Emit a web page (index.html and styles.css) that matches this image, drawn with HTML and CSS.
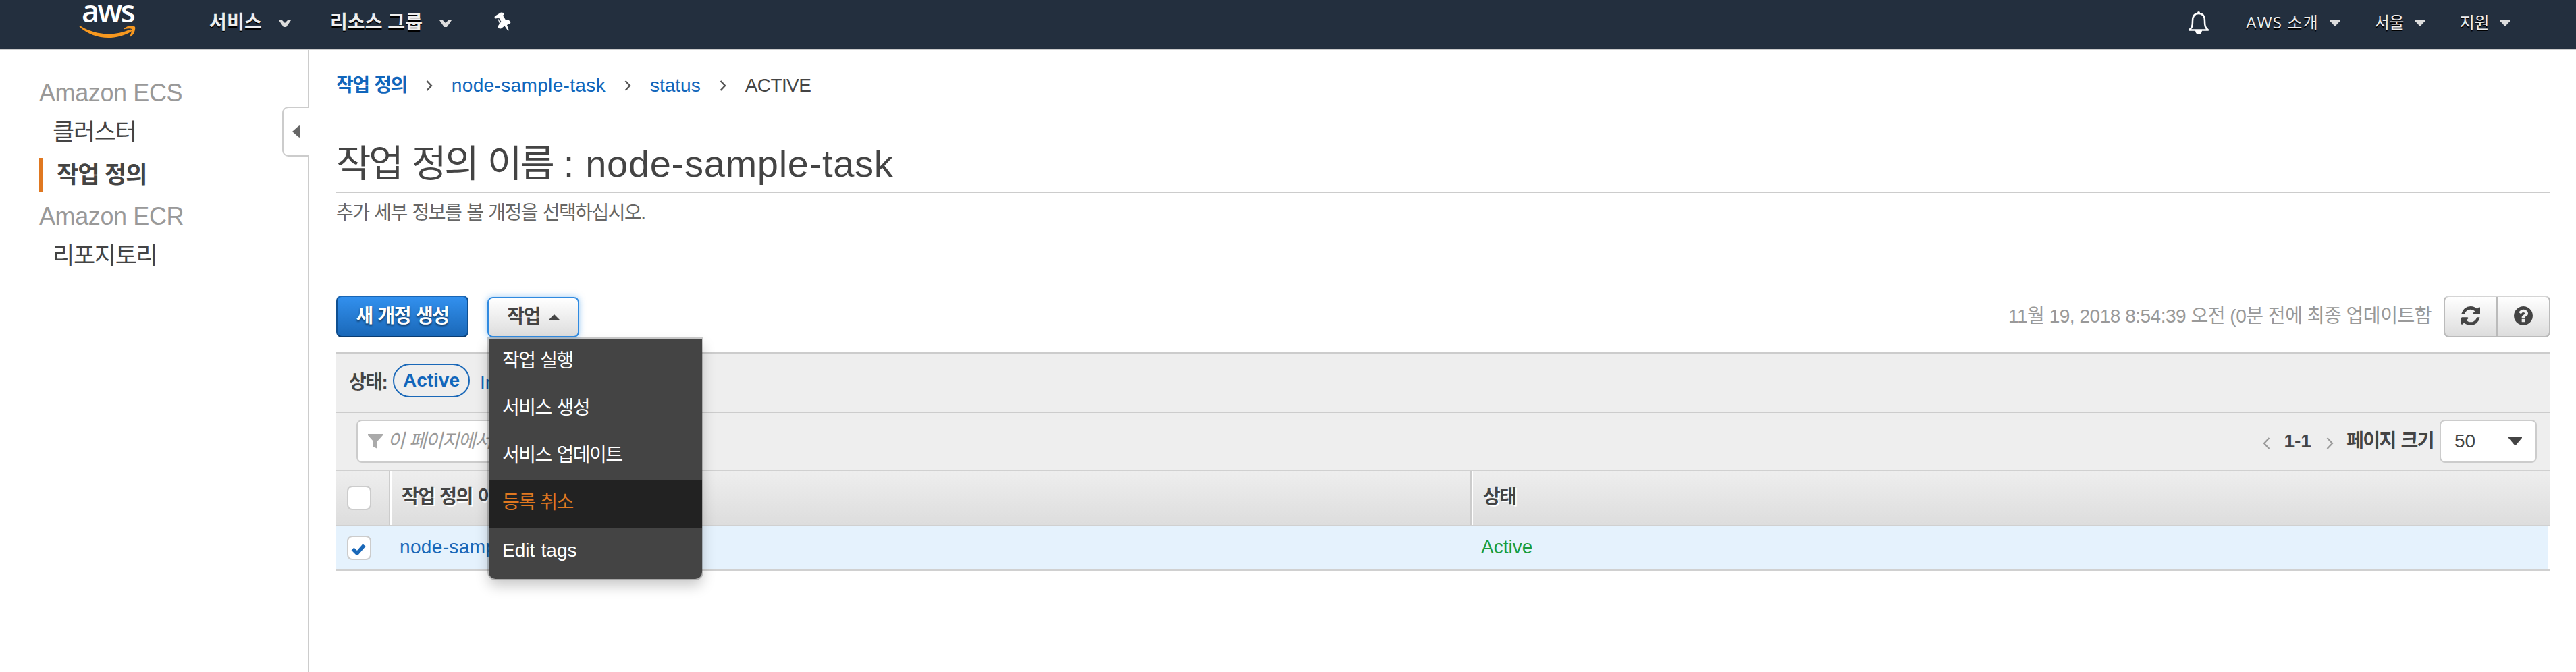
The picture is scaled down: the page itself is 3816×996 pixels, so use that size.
FILE: index.html
```html
<!DOCTYPE html>
<html lang="ko">
<head>
<meta charset="utf-8">
<title>Amazon ECS</title>
<link rel="stylesheet" href="styles.css">
</head>
<body>
<header class="nav">
  <a class="logo">
    <span class="logo-text">aws</span>
    <svg class="logo-smile" width="84" height="20" viewBox="0 0 84 20"><path d="M1 2C0 1 1 0 3 1C24 14 52 16 75 6C78 5 80 7 77 9C53 23 22 21 1 2Z"/><path d="M67 4C73-1 82 0 83 2C84 5 82 13 77 16C75 17 75 16 76 14C78 9 79 6 78 5C77 4 72 4 68 5C66 6 66 5 67 4Z"/></svg>
  </a>
  <div class="nav-main">
    <span class="nav-item services">서비스<svg class="chev" width="18" height="11" viewBox="0 0 18 11"><path d="M0 0H5L9 4L13 0H18L11 10H7Z"/></svg></span>
    <span class="nav-item groups">리소스 그룹<svg class="chev" width="18" height="11" viewBox="0 0 18 11"><path d="M0 0H5L9 4L13 0H18L11 10H7Z"/></svg></span>
    <svg class="pin" width="26" height="28" viewBox="0 0 26 28"><path d="M1 6L10 0.500L14 1L14 4L13 5L17 11.500L22 12L24.500 14.500L24 16.500L19 19L21.500 26L21.500 27.500L20 27L15.500 20.500L10 24.500L6.500 24L5.500 21L8 17L5 9L2 9.500L0.500 8Z"/><path class="pin-slot" d="M6.500 9L10 15"/></svg>
  </div>
  <div class="nav-right">
    <svg class="bell" width="32" height="36" viewBox="0 0 32 36"><path class="bell-line" d="M16 4C9 4 7 9 7 15C7 23 6 25 2 28.500H30C26 25 25 23 25 15C25 9 23 4 16 4Z"/><circle cx="16" cy="3" r="2"/><path d="M11 29H21Q21 34.500 16 34.500Q11 34.500 11 29Z"/></svg>
    <span class="nav-small about">AWS 소개<svg class="caret-d" width="14" height="9" viewBox="0 0 14 9"><path d="M0 0H14V1.500L8 8H6L0 1.500Z"/></svg></span>
    <span class="nav-small region">서울<svg class="caret-d" width="14" height="9" viewBox="0 0 14 9"><path d="M0 0H14V1.500L8 8H6L0 1.500Z"/></svg></span>
    <span class="nav-small support">지원<svg class="caret-d" width="14" height="9" viewBox="0 0 14 9"><path d="M0 0H14V1.500L8 8H6L0 1.500Z"/></svg></span>
  </div>
</header>
<div class="body">
  <aside class="sidebar">
    <div class="side-group">Amazon ECS</div>
    <a class="side-link">클러스터</a>
    <a class="side-link active">작업 정의</a>
    <div class="side-group second">Amazon ECR</div>
    <a class="side-link">리포지토리</a>
    <div class="handle"><svg width="11" height="18" viewBox="0 0 11 18"><path d="M11 0V18L9 17L0 9L9 1Z"/></svg></div>
  </aside>
  <main class="content">
    <nav class="crumbs">
      <a class="crumb-home">작업 정의</a>
      <svg class="sep" width="10" height="16" viewBox="0 0 10 16"><path d="M1.500 1L8 8L1.500 15"/></svg>
      <a class="wide">node-sample-task</a>
      <svg class="sep" width="10" height="16" viewBox="0 0 10 16"><path d="M1.500 1L8 8L1.500 15"/></svg>
      <a>status</a>
      <svg class="sep" width="10" height="16" viewBox="0 0 10 16"><path d="M1.500 1L8 8L1.500 15"/></svg>
      <span class="crumb-now">ACTIVE</span>
    </nav>
    <h1 class="title"><span class="ko">작업 정의 이름</span> : node-sample-task</h1>
    <p class="desc">추가 세부 정보를 볼 개정을 선택하십시오.</p>
    <div class="toolbar">
      <button class="btn primary">새 개정 생성</button>
      <div class="drop">
        <button class="btn actions">작업<svg width="16" height="8" viewBox="0 0 16 8"><path d="M8 0L16 8H0Z"/></svg></button>
        <ul class="menu">
          <li>작업 실행</li>
          <li>서비스 생성</li>
          <li>서비스 업데이트</li>
          <li class="hover">등록 취소</li>
          <li class="latin">Edit tags</li>
        </ul>
      </div>
      <span class="updated">11월 19, 2018 8:54:39 오전 (0분 전에 최종 업데이트함</span>
      <div class="icon-group">
        <button class="icon-btn"><svg width="28" height="28" viewBox="0 0 1536 1536"><path d="M1511 928q0 5-1 7-64 268-268 434.500T764 1536q-146 0-282.500-55T238 1324l-129 129q-19 19-45 19t-45-19-19-45V960q0-26 19-45t45-19h448q26 0 45 19t19 45-19 45l-137 137q71 66 161 102t187 36q134 0 250-65t186-179q11-17 53-117 8-23 30-23h192q13 0 22.500 9.500t9.500 22.500zM1536 128v448q0 26-19 45t-45 19h-448q-26 0-45-19t-19-45 19-45l138-138Q969 256 768 256q-134 0-250 65T332 500q-11 17-53 117-8 23-30 23H50q-13 0-22.500-9.500T18 608v-7q65-268 270-434.500T768 0q146 0 284 55.500T1297 212l130-129q19-19 45-19t45 19 19 45z"/></svg></button>
        <button class="icon-btn"><svg width="28" height="28" viewBox="0 0 1536 1536"><path d="M896 1248v-192q0-14-9-23t-23-9H672q-14 0-23 9t-9 23v192q0 14 9 23t23 9h192q14 0 23-9t9-23zm256-672q0-88-55.500-163T958 297t-170-41q-243 0-371 213-15 24 8 42l132 100q7 6 19 6 16 0 25-12 53-68 86-92 34-24 86-24 48 0 85.500 26t37.500 59q0 38-20 61t-68 45q-63 28-115.500 86.500T640 892v36q0 14 9 23t23 9h192q14 0 23-9t9-23q0-19 21.500-49.500T972 829q32-18 49-28.500t46-35 44.500-48 28-60.500 12.500-81zm384 192q0 209-103 385.500T1153.500 1433 768 1536t-385.500-103T103 1153.500 0 768t103-385.500T382.500 103 768 0t385.500 103T1433 382.500 1536 768z"/></svg></button>
      </div>
    </div>
    <section class="panel">
      <div class="status-row">
        <span class="status-label">상태:</span>
        <span class="pill">Active</span>
        <a class="inactive">Inactive</a>
      </div>
      <div class="filter-row">
        <div class="filter-box">
          <svg width="22" height="22" viewBox="0 0 22 22"><path d="M0 0H22V2L14 11V22L8 19V11L0 2Z"/></svg>
          <span>이 페이지에서 필터링</span>
        </div>
        <div class="pager">
          <svg class="page-arrow" width="11" height="18" viewBox="0 0 11 18"><path d="M9.500 1L2 9L9.500 17"/></svg>
          <b class="range">1-1</b>
          <svg class="page-arrow" width="11" height="18" viewBox="0 0 11 18"><path d="M1.500 1L9 9L1.500 17"/></svg>
          <b class="size-label">페이지 크기</b>
          <div class="select"><span>50</span><svg width="20" height="12" viewBox="0 0 20 12"><path d="M0 0H20V1L11.500 11H8.500L0 1Z"/></svg></div>
        </div>
      </div>
      <div class="grid head">
        <div class="cell-check"><span class="check"></span></div>
        <div class="cell">작업 정의 이름 : 개정</div>
        <div class="cell">상태</div>
      </div>
      <div class="grid row">
        <div class="cell-check"><span class="check"><svg width="22" height="18" viewBox="0 0 22 18"><path d="M2.500 8.500L9 15L19.500 3"/></svg></span></div>
        <div class="cell link">node-sample-task:1</div>
        <div class="cell ok">Active</div>
      </div>
    </section>
  </main>
</div>
</body>
</html>
```
FILE: styles.css
```css
* { box-sizing: border-box; }
body {
  margin: 0;
  height: 996px;
  overflow: hidden;
  background: #fff;
  color: #444;
  font: 28px/34px "Liberation Sans", "Noto Sans CJK KR", sans-serif;
  display: flex;
  flex-direction: column;
}
svg { display: block; flex: none; }
button { font: inherit; margin: 0; padding: 0; }

/* top navigation */
.nav {
  height: 74px;
  flex: none;
  background: #232f3e;
  border-bottom: 2px solid #ccc;
  display: flex;
  color: #eee;
  font-family: "Open Sans", "Noto Sans CJK KR", sans-serif;
  text-shadow: 0 2px 0 #000;
}
.logo { width: 84px; margin-left: 117px; text-shadow: none; }
.logo-text {
  display: block;
  height: 38px;
  line-height: 31px;
  padding-left: 4px;
  color: #fff;
  font-size: 45px;
  font-weight: 600;
  letter-spacing: -2.5px;
}
.logo-smile { fill: #f7981f; }
.nav-main { display: flex; align-items: flex-start; }
.nav-item { display: flex; font-weight: 700; padding-top: 15px; letter-spacing: .2px; }
.services { margin-left: 109px; }
.groups { margin-left: 58px; }
.chev { margin: 15px 0 0 25px; fill: #ddd; }
.pin { margin: 18px 0 0 63px; fill: #fff; }
.pin-slot { fill: none; stroke: #232f3e; stroke-width: 1.5; }
.nav-right { display: flex; margin-left: auto; padding-right: 98px; }
.bell { margin: 16px 54px 0 0; fill: #fff; }
.bell-line { fill: none; stroke: #fff; stroke-width: 2.5; stroke-linejoin: round; }
.nav-small { display: flex; font-size: 24px; padding-top: 16px; }
.about { letter-spacing: 1.1px; }
.region, .support { margin-left: 52px; letter-spacing: -.5px; }
.caret-d { margin: 14px 0 0 17px; fill: #ddd; }

/* sidebar */
.body { display: flex; flex: 1; min-height: 0; }
.sidebar {
  position: relative;
  width: 458px;
  flex: none;
  border-right: 2px solid #ccc;
  padding: 43px 0 0 58px;
  font-size: 36px;
}
.side-group { height: 42px; line-height: 42px; color: #999; letter-spacing: -.4px; }
.side-link {
  display: block;
  height: 50px;
  line-height: 49px;
  margin-top: 12px;
  padding-left: 20px;
  font-size: 35px;
  letter-spacing: -1.3px;
}
.side-link.active { border-left: 6px solid #e07820; font-weight: 700; margin-top: 13px; letter-spacing: -1px; }
.side-group.second { margin-top: 16px; }
.handle {
  position: absolute;
  right: -2px;
  top: 84px;
  width: 40px;
  height: 74px;
  background: #fff;
  border: 2px solid #ccc;
  border-right: 0;
  border-radius: 9px 0 0 9px;
  padding: 26px 0 0 13px;
}
.handle svg { fill: #666; }

/* content */
.content { flex: 1; padding: 36px 38px 0 40px; }
.crumbs { display: flex; align-items: center; height: 34px; color: #1166bb; }
.crumb-home, .desc, .btn, .menu li, .status-label, .filter-box, .size-label, .head .cell {
  letter-spacing: -1.5px;
  word-spacing: 1.5px;
}
.crumb-home { font-weight: 700; }
.crumb-now { color: #444; letter-spacing: -.6px; }
.wide, .link { letter-spacing: .35px; }
.sep { margin: 0 28px; fill: none; stroke: #555; stroke-width: 2.4; }
.title {
  margin: 66px 0 0;
  height: 76px;
  line-height: 66px;
  white-space: pre;
  font-size: 56px;
  font-weight: 400;
  letter-spacing: .7px;
  border-bottom: 2px solid #ccc;
}
.title .ko { letter-spacing: -3.3px; word-spacing: 3.3px; }
.desc { margin: 13px 0 0; color: #666; }
.toolbar { display: flex; height: 62px; margin-top: 105px; }
.btn { display: flex; align-items: center; justify-content: center; font-weight: 700; border-radius: 8px; }
.primary {
  width: 196px;
  height: 62px;
  color: #fff;
  background: linear-gradient(#3290ee, #1a68b8);
  border: 2px solid #0f4f90;
  border-top-color: #1a66b4;
  border-bottom-color: #0a3d72;
  text-shadow: 0 2px 3px rgba(0, 0, 0, .6);
}
.drop { position: relative; margin: 2px 0 0 28px; }
.actions {
  width: 136px;
  height: 60px;
  color: #444;
  background: linear-gradient(#fff, #ddd);
  border: 2px solid #308ae0;
  box-shadow: 0 0 10px rgba(50, 145, 230, .5);
}
.actions svg { margin-left: 13px; fill: #444; }
.menu {
  position: absolute;
  z-index: 2;
  left: 2px;
  top: 62px;
  width: 316px;
  height: 356px;
  margin: 0;
  padding: 0;
  list-style: none;
  background: #444;
  border-radius: 0 0 10px 10px;
  box-shadow: 0 0 0 2px rgba(0, 0, 0, .2), 0 10px 20px rgba(0, 0, 0, .22);
  color: #fff;
}
.menu li { height: 70px; line-height: 66px; padding-left: 20px; }
.menu .hover { background: #222; color: #e07820; }
.menu .latin { letter-spacing: 0; line-height: 68px; }
.updated { margin-left: auto; line-height: 62px; color: #999; letter-spacing: -.48px; }
.icon-group {
  display: flex;
  width: 158px;
  margin-left: 18px;
  border: 2px solid #bbb;
  border-top-color: #d5d5d5;
  border-radius: 8px;
  background: linear-gradient(#fff, #ddd);
}
.icon-btn { flex: 1; display: flex; align-items: center; justify-content: center; background: none; border: 0; padding-bottom: 2px; }
.icon-btn + .icon-btn { border-left: 2px solid #bbb; }
.icon-btn svg { fill: #444; }

/* table */
.panel { margin-top: 22px; border-top: 2px solid #ccc; background: #eee; }
.status-row { display: flex; align-items: center; height: 88px; padding-left: 19px; border-bottom: 2px solid #ccc; }
.status-label { width: 65px; font-weight: 700; }
.pill {
  width: 114px;
  height: 50px;
  margin-top: -6px;
  line-height: 46px;
  text-align: center;
  border: 2px solid #1a68b8;
  border-radius: 25px;
  color: #1166bb;
  font-weight: 700;
}
.inactive { margin-left: 15px; color: #1166bb; }
.filter-row { display: flex; align-items: center; height: 84px; padding: 0 20px 0 30px; justify-content: space-between; }
.filter-box {
  display: flex;
  align-items: center;
  width: 480px;
  height: 64px;
  padding-left: 15px;
  background: #fff;
  border: 2px solid #ccc;
  border-radius: 8px;
  color: #999;
  font-style: italic;
}
.filter-box svg { fill: #aaa; margin-right: 7px; }
.pager { display: flex; align-items: center; }
.page-arrow { fill: none; stroke: #999; stroke-width: 2.2; margin-top: 6px; }
.range { margin: 0 22px 0 20px; }
.size-label { margin: 0 9px 0 19px; }
.select {
  display: flex;
  align-items: center;
  justify-content: space-between;
  width: 144px;
  height: 64px;
  padding: 0 20px;
  background: #fff;
  border: 2px solid #ccc;
  border-radius: 8px;
}
.select svg { fill: #444; }
.grid { display: grid; grid-template-columns: 80px 1602px 1fr; }
.head { height: 84px; border: solid #d0d0d0; border-width: 2px 0; background: linear-gradient(#eee, #ddd); font-weight: 700; text-shadow: 2px 2px 0 #fff; }
.head .cell { padding: 22px 0 0 17px; }
.head > div:not(:last-child) { border-right: 2px solid #ccc; box-shadow: 2px 0 0 #fff; }
.row { height: 66px; background: linear-gradient(90deg, #e5f2fd calc(100% - 4px), #fff 0); border-bottom: 2px solid #d0d0d0; }
.row .cell { line-height: 62px; padding-left: 14px; }
.cell-check { display: flex; align-items: center; padding-left: 16px; }
.check {
  display: flex;
  align-items: center;
  justify-content: center;
  width: 36px;
  height: 36px;
  background: #fff;
  border: 2px solid #ccc;
  border-radius: 8px;
}
.check svg { fill: none; stroke: #1a68b8; stroke-width: 5.5; margin: 4px 2px 0 0; }
.link { color: #1a68b8; }
.ok { color: #1a9c3c; }
```
